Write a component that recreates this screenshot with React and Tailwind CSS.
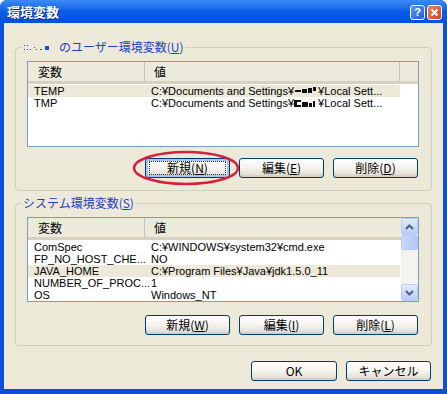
import React from 'react';

const jp = { fontFamily: '"Noto Sans CJK JP", "Liberation Sans", sans-serif' };
const latin = { fontFamily: '"Liberation Sans", "Noto Sans CJK JP", sans-serif' };

const Blob = ({ variant }) => (
  <svg width="24" height="9" viewBox="0 0 24 9" className="inline-block align-[-1px]">
    {variant === 1 ? (
      <g fill="#111">
        <rect x="1" y="3" width="6" height="2" />
        <rect x="8" y="2" width="5" height="4" />
        <rect x="14" y="1" width="4" height="5" />
        <rect x="19" y="0" width="3" height="4" />
      </g>
    ) : (
      <g fill="#111">
        <rect x="0" y="1" width="3" height="7" />
        <rect x="3" y="1" width="4" height="2" />
        <rect x="3" y="6" width="4" height="2" />
        <rect x="8" y="3" width="6" height="5" />
        <rect x="15" y="4" width="3" height="4" />
        <rect x="19" y="2" width="2" height="6" />
      </g>
    )}
  </svg>
);

const UserDots = () => (
  <svg width="30" height="10" viewBox="0 0 30 10" className="inline-block mr-[6px] align-[0px]">
    <g fill="#1D4FC6">
      <rect x="1" y="3" width="1" height="1" />
      <rect x="4" y="3" width="1" height="1" />
      <rect x="1" y="7" width="1" height="1" />
      <rect x="4" y="7" width="1" height="1" />
      <rect x="7" y="7" width="1" height="1" />
      <rect x="11" y="5" width="1" height="1" />
      <rect x="13" y="7" width="1" height="1" />
      <rect x="17" y="7" width="2" height="1" />
      <rect x="22" y="4" width="4" height="4" />
    </g>
  </svg>
);

const XpButton = ({ children, focused, className = '' }) => (
  <button
    className={`h-[20px] w-[85px] rounded-[3px] border border-[#003C74] bg-gradient-to-b from-[#FFFFFF] via-[#F4F3EE] to-[#DCD9CE] text-[12px] leading-none text-black flex items-center justify-center ${
      focused ? 'shadow-[inset_0_0_0_2px_#A8C6F2]' : 'shadow-[inset_0_-2px_0_#D6D0C5]'
    } ${className}`}
    style={jp}
  >
    {focused ? (
      <span className="w-[77px] h-[14px] border border-dotted border-[#333] flex items-center justify-center">{children}</span>
    ) : (
      children
    )}
  </button>
);

const Header = ({ second = true }) => (
  <div className="flex h-[22px] bg-[#EBEADB] border-b-[3px] border-[#D5D2C2] text-[12px] text-black" style={jp}>
    <div className="w-[117px] pl-[10px] flex items-center border-r border-[#C7C5B2]">変数</div>
    <div className={`w-[255px] pl-[9px] flex items-center ${second ? 'border-r border-[#C7C5B2]' : ''}`}>値</div>
    <div className="flex-1" />
  </div>
);

const Row = ({ name, value, selected }) => (
  <div className="flex h-[12px] items-center text-[11px] leading-none text-black" style={latin}>
    <div className={`w-[117px] pl-[6px] h-full flex items-center ${selected ? 'bg-[#ECE9D8]' : ''}`}>{name}</div>
    <div className={`w-[255px] pl-[6px] h-full flex items-center whitespace-nowrap ${selected ? 'bg-[#ECE9D8]' : ''}`}>{value}</div>
  </div>
);

const ArrowBtn = ({ up }) => (
  <div className="h-[17px] w-[17px] rounded-[2px] border border-[#BCCBF0] bg-gradient-to-b from-[#E2EBFE] to-[#B9CCF8] flex items-center justify-center">
    <svg width="9" height="6" viewBox="0 0 9 6">
      <path d={up ? 'M1 5 L4.5 1.5 L8 5' : 'M1 1 L4.5 4.5 L8 1'} stroke="#4D6185" strokeWidth="2" fill="none" />
    </svg>
  </div>
);

export default function App() {
  return (
    <div className="relative w-[447px] h-[394px] bg-[#0A4FD8] rounded-t-[7px] overflow-hidden flex flex-col">
      {/* title bar */}
      <div className="h-[23px] flex items-center justify-between pl-[7px] pr-[5px] bg-gradient-to-b from-[#3D8BF7] via-[#0A5CE8] to-[#0250DF]">
        <span className="text-white font-bold text-[13px] [text-shadow:1px_1px_0_#0A2A8A]" style={jp}>環境変数</span>
        <div className="flex gap-[2px] mt-[1px]">
          <div className="w-[15px] h-[15px] rounded-[3px] border border-white bg-gradient-to-br from-[#5C93F5] to-[#1F5FE0] flex items-center justify-center text-white text-[11px] font-bold leading-none" style={latin}>?</div>
          <div className="w-[15px] h-[15px] rounded-[3px] border border-white bg-gradient-to-br from-[#E8845E] to-[#C8401B] flex items-center justify-center">
            <svg width="9" height="9" viewBox="0 0 9 9">
              <path d="M1.5 1.5 L7.5 7.5 M7.5 1.5 L1.5 7.5" stroke="white" strokeWidth="2" />
            </svg>
          </div>
        </div>
      </div>

      {/* body */}
      <div className="mx-[4px] mb-[5px] flex-1 bg-[#ECE9D8] flex flex-col">
        <fieldset className="mt-[17px] ml-[11px] w-[417px] border border-[#D0D0BF] rounded-[4px] pb-[12px]">
          <legend className="ml-[6px] px-[1px] text-[12px] leading-[14px] text-[#1F3FC4]" style={jp}>
            <UserDots />
            のユーザー環境変数(<u>U</u>)
          </legend>
          <div className="mt-[7px] ml-[11px] w-[392px] h-[86px] border border-[#7F9DB9] bg-white">
            <Header />
            <div className="mt-[1px]">
              <Row name="TEMP" selected value={<>C:¥Documents and Settings¥<Blob variant={1} />¥Local Sett...</>} />
              <Row name="TMP" value={<>C:¥Documents and Settings¥<Blob variant={2} />¥Local Sett...</>} />
            </div>
          </div>
          <div className="mt-[11px] ml-[129px] flex gap-[9px]">
            <XpButton focused>新規(<u>N</u>)</XpButton>
            <XpButton>編集(<u>E</u>)</XpButton>
            <XpButton>削除(<u>D</u>)</XpButton>
          </div>
        </fieldset>

        <fieldset className="mt-[5px] ml-[11px] w-[417px] border border-[#D0D0BF] rounded-[4px] pb-[10px]">
          <legend className="ml-[6px] px-[1px] text-[12px] leading-[14px] text-[#1F3FC4]" style={jp}>
            システム環境変数(<u>S</u>)
          </legend>
          <div className="mt-[7px] ml-[11px] w-[392px] h-[85px] border border-[#7F9DB9] bg-white flex overflow-hidden">
            <div className="flex-1 overflow-hidden">
              <Header second={false} />
              <div className="mt-[1px]">
                <Row name="ComSpec" value="C:¥WINDOWS¥system32¥cmd.exe" />
                <Row name="FP_NO_HOST_CHE..." value="NO" />
                <Row name="JAVA_HOME" selected value="C:¥Program Files¥Java¥jdk1.5.0_11" />
                <Row name="NUMBER_OF_PROC..." value="1" />
                <Row name="OS" value="Windows_NT" />
              </div>
            </div>
            <div className="w-[17px] bg-[#F4F3EE] flex flex-col">
              <ArrowBtn up />
              <div className="h-[15px] rounded-[2px] border border-[#B6C8F4] bg-gradient-to-r from-[#C8D8FC] to-[#B4C8F6]" />
              <div className="flex-1" />
              <ArrowBtn />
            </div>
          </div>
          <div className="mt-[13px] ml-[129px] flex gap-[9px]">
            <XpButton>新規(<u>W</u>)</XpButton>
            <XpButton>編集(<u>I</u>)</XpButton>
            <XpButton>削除(<u>L</u>)</XpButton>
          </div>
        </fieldset>

        <div className="mt-[15px] ml-[247px] flex gap-[9px]">
          <XpButton className="w-[86px]">OK</XpButton>
          <XpButton>キャンセル</XpButton>
        </div>
      </div>

      {/* red annotation ellipse */}
      <svg className="absolute left-[131px] top-[150px]" width="110" height="36" viewBox="0 0 110 36">
        <ellipse cx="55" cy="18" rx="52" ry="16" fill="none" stroke="#D4213D" strokeWidth="2.5" />
      </svg>
    </div>
  );
}
